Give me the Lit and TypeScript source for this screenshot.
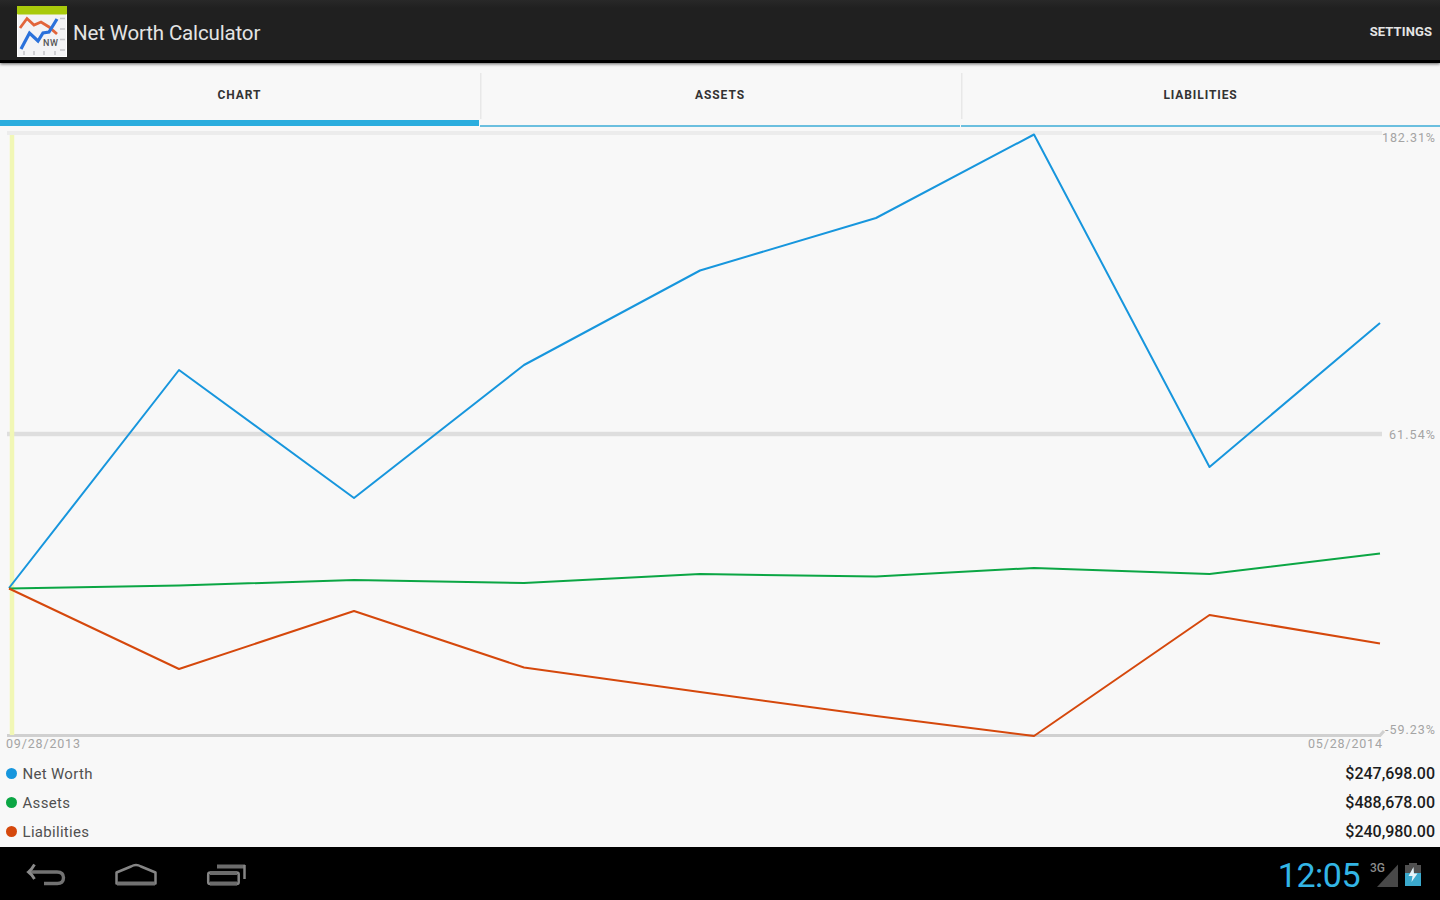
import { LitElement, html, svg, css } from 'lit';
import { customElement, property } from 'lit/decorators.js';
import { classMap } from 'lit/directives/class-map.js';

const appIcon = html`<svg xmlns="http://www.w3.org/2000/svg" width="50" height="51" viewBox="0 0 50 51" fill="none">
  <rect width="50" height="51" fill="#f3f3f5"/>
  <path d="M0 0h50v8.500H0z" fill="#a9ca0b"/>
  <path d="M.5 8.500v42h49v-42" stroke="#fff"/>
  <path d="M43 12.500h5M43 23h5M43 33.500h5M43 44h5M7 45v4M17 45v4M27 45v4M38 45v4" stroke="#c4c4c8" stroke-width="1.500"/>
  <path d="m3 22 7-9.500 7 6.500 7-3 8 5 8 7" stroke="#e2653b" stroke-width="2.800"/>
  <path d="m4 43 8.500-16 8.500 8 5-8 6-1 8-13" stroke="#2a71db" stroke-width="3.200"/>
  <text x="26" y="40" font-family="Roboto, sans-serif" font-size="9" font-weight="500" fill="#555" textLength="15">NW</text>
</svg>`;

const backIcon = html`<svg xmlns="http://www.w3.org/2000/svg" width="40" height="26" viewBox="0 0 40 26" fill="none" stroke="#8a8a8a" stroke-width="2.800"><path d="M4 10h27q6.500 0 6.500 5.800T31 21.500H18" stroke="#727272" stroke-width="3.400"/><path d="M8.500 2.500Q6 7 2.500 10 6 12.500 8.500 17"/></svg>`;

const homeIcon = html`<svg xmlns="http://www.w3.org/2000/svg" width="44" height="26" viewBox="0 0 44 26" fill="none" stroke="#858585" stroke-width="2.500"><path d="M2.500 21.500V10.500L17 4.500q5-3 10 0l14.500 6v11z" stroke-linejoin="round"/><path d="M3 21.500h38" stroke="#727272" stroke-width="4"/></svg>`;

const recentIcon = html`<svg xmlns="http://www.w3.org/2000/svg" width="42" height="26" viewBox="0 0 42 26" fill="none" stroke="#858585" stroke-width="2.500"><rect x="2.200" y="10.500" width="30.500" height="11.500" rx="2"/><path d="M4 11h27M4 21.500h27" stroke="#6c6c6c" stroke-width="4"/><path d="M11 4.500h28" stroke="#6c6c6c" stroke-width="4"/><path d="M38.500 3v14"/></svg>`;

const signalIcon = html`<svg xmlns="http://www.w3.org/2000/svg" width="29" height="26" viewBox="0 0 29 26"><path d="M29 2.500V25H8z" fill="#484848"/><text x="1" y="10" font-family="Roboto, sans-serif" font-size="12" font-weight="500" fill="#8c8c8c" textLength="15">3G</text></svg>`;

const batteryIcon = html`<svg xmlns="http://www.w3.org/2000/svg" width="16" height="25" viewBox="0 0 16 25"><path d="M4 1h8v2h4v8H0V3h4z" fill="#505050"/><path d="M0 11h16v13H0z" fill="#3ba9cd"/><path d="M8.500 5 3.500 14h4L6.500 20l6-8.500H9z" fill="#e6f3f8"/></svg>`;

interface Series {
  name: string;
  color: string;
  total: string;
  points: [number, number][];
}

const series: Series[] = [
  {
    name: 'Net Worth',
    color: '#1796dd',
    total: '$247,698.00',
    points: [[9, 461], [179, 243], [354, 371], [524, 238], [700, 143.5], [876, 91], [1034, 7.5], [1209.5, 340], [1380, 196]],
  },
  {
    name: 'Assets',
    color: '#0ba644',
    total: '$488,678.00',
    points: [[9, 461.5], [179, 458.5], [354, 453], [524, 456], [700, 447], [876, 449.5], [1034, 441], [1209.5, 447], [1380, 426.5]],
  },
  {
    name: 'Liabilities',
    color: '#d5480c',
    total: '$240,980.00',
    points: [[9, 461.5], [179, 542], [354, 484], [524, 540.5], [700, 565], [876, 589], [1034, 609], [1209.5, 488], [1380, 516.5]],
  },
];

@customElement('growth-chart')
export class GrowthChart extends LitElement {
  static styles = css`
    :host {
      display: block;
    }
    svg {
      display: block;
    }
    .label {
      fill: #a4a4a4;
      font: 12.5px Roboto, sans-serif;
    }
    .line {
      fill: none;
      stroke-width: 2;
      stroke-linejoin: round;
    }
  `;

  @property({ attribute: false }) series: Series[] = [];

  render() {
    return html`
      <svg width="1440" height="632" viewBox="0 0 1440 632">
        <path d="M7 6H1382" stroke="#ececec" stroke-width="4" />
        <path d="M7 307H1382" stroke="#dedede" stroke-width="4.500" />
        <path d="M7 608.500H1380L1384 604" fill="none" stroke="#d0d0d0" stroke-width="3" />
        <path d="M12 8V608" stroke="#f1f7b5" stroke-width="4.500" />
        ${this.series.map(
          (s) => svg`<polyline class="line" stroke=${s.color} points=${s.points.map((p) => p.join(',')).join(' ')} />`
        )}
        <text class="label" x="1382" y="15" textLength="53">182.31%</text>
        <text class="label" x="1389" y="312" textLength="46">61.54%</text>
        <text class="label" x="1385" y="606.500" textLength="50">-59.23%</text>
        <text class="label" x="6" y="621" textLength="74">09/28/2013</text>
        <text class="label" x="1308" y="621" textLength="74">05/28/2014</text>
      </svg>
    `;
  }
}

@customElement('app-root')
export class AppRoot extends LitElement {
  static styles = css`
    :host {
      display: flex;
      flex-direction: column;
      width: 1440px;
      height: 900px;
      overflow: hidden;
      background: #f8f8f8;
      color: #333;
      font-family: Roboto, sans-serif;
    }
    .bar {
      box-sizing: border-box;
      display: flex;
      align-items: center;
      height: 63px;
      padding: 3px 8px 0 17px;
      border-bottom: 3px solid #000;
      background: linear-gradient(#282828, #202020 8px);
      box-shadow: 0 1px 3px rgba(0, 0, 0, 0.6);
      color: #e4e4e4;
      z-index: 1;
    }
    .bar svg {
      display: block;
    }
    .title {
      flex: 1;
      margin-left: 6px;
      padding-top: 2px;
      font-size: 20.5px;
      letter-spacing: -0.15px;
    }
    .settings {
      font-size: 13px;
      font-weight: 700;
      letter-spacing: 0.1px;
    }
    .tabs {
      display: grid;
      grid-template-columns: 479px 480px 479px;
      column-gap: 1px;
      height: 64px;
    }
    .tab {
      box-sizing: border-box;
      display: flex;
      align-items: center;
      justify-content: center;
      padding-top: 2px;
      border-bottom: 2px solid #6bbfdf;
      font-size: 12px;
      font-weight: 700;
      letter-spacing: 0.9px;
      background: linear-gradient(#e8e8e8, #e8e8e8) left 10px / 1.5px 46px no-repeat;
    }
    .tab.active {
      border-bottom: 6px solid #2badde;
      padding-top: 7px;
      margin-bottom: 1px;
      background: none;
    }
    .legend {
      display: flex;
      flex-direction: column;
      height: 88px;
    }
    .row {
      display: flex;
      align-items: center;
      height: 29px;
      padding: 0 5px 0 6px;
      font-size: 15px;
    }
    .dot {
      width: 11px;
      height: 11px;
      border-radius: 50%;
    }
    .name {
      flex: 1;
      margin-left: 5.5px;
      color: #505050;
      letter-spacing: 0.3px;
    }
    .total {
      color: #1c1c1c;
      font-size: 16px;
      font-weight: 500;
      letter-spacing: -0.02px;
    }
    .nav {
      box-sizing: border-box;
      display: flex;
      align-items: center;
      height: 53px;
      padding: 2px 19px 0 26px;
      background: #000;
    }
    .keys {
      display: flex;
      flex: 1;
      gap: 48px;
    }
    .clock {
      color: #33b5e5;
      font-size: 34px;
      letter-spacing: -0.5px;
    }
    .signal {
      margin: 0 7px 0 9px;
    }
    .signal svg,
    .battery svg,
    .keys svg {
      display: block;
    }
  `;

  static tabs = ['CHART', 'ASSETS', 'LIABILITIES'];

  render() {
    return html`
      <header class="bar">
        ${appIcon}
        <span class="title">Net Worth Calculator</span>
        <span class="settings">SETTINGS</span>
      </header>
      <nav class="tabs">
        ${AppRoot.tabs.map((tab, i) => html`<div class=${classMap({ tab: true, active: i === 0 })}>${tab}</div>`)}
      </nav>
      <growth-chart .series=${series}></growth-chart>
      <section class="legend">
        ${series.map(
          (s) => html`
            <div class="row">
              <span class="dot" style="background: ${s.color}"></span>
              <span class="name">${s.name}</span>
              <span class="total">${s.total}</span>
            </div>
          `
        )}
      </section>
      <footer class="nav">
        <div class="keys">${backIcon}${homeIcon}${recentIcon}</div>
        <span class="clock">12:05</span>
        <span class="signal">${signalIcon}</span>
        <span class="battery">${batteryIcon}</span>
      </footer>
    `;
  }
}
